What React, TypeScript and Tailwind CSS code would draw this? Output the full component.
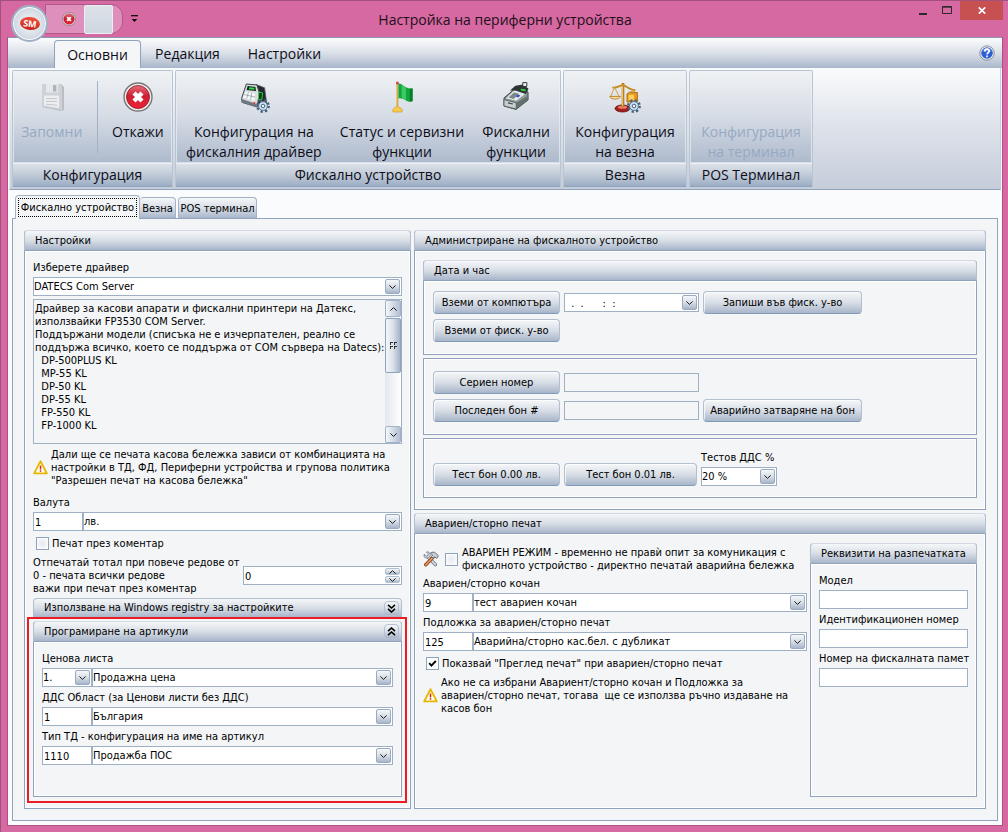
import { useId, useState, type ReactNode } from 'react';
import { clsx } from 'clsx';

const DRIVER_INFO = `Драйвер за касови апарати и фискални принтери на Датекс,
използвайки FP3530 COM Server.
Поддържани модели (списъка не е изчерпателен, реално се
поддържа всичко, което се поддържа от COM сървера на Datecs):
  DP-500PLUS KL
  MP-55 KL
  DP-50 KL
  DP-55 KL
  FP-550 KL
  FP-1000 KL`;

const SILVER = 'bg-linear-to-b from-[#f5f7f9] via-[#d8dee6] to-[#a8b5ca]';
const FIELD = 'h-[19px] min-w-0 border border-[#9fb0c5] bg-white pt-px text-black outline-none';
const LABEL = 'block h-5 leading-[22px] whitespace-nowrap';

/* ---------- icons ---------- */

function Chevron({ up = false }: { up?: boolean }) {
  return (
    <svg viewBox="0 0 7 4" className={clsx('h-[4px] w-[7px]', up && 'rotate-180')}>
      <path d="M.4.4 3.5 3.4 6.6.4" fill="none" stroke="#1b1b1b" />
    </svg>
  );
}

function DoubleChevron({ up = false }: { up?: boolean }) {
  return (
    <svg viewBox="0 0 9 9" className={clsx('h-[9px] w-[9px]', up && 'rotate-180')}>
      <path d="M1 .8 4.5 4 8 .8M1 4.8 4.5 8 8 4.8" fill="none" stroke="#000" strokeWidth="1.6" />
    </svg>
  );
}

function WarningIcon() {
  return (
    <svg viewBox="0 0 15 15" className="h-[15px] w-[15px] shrink-0">
      <path d="M7.5 1.2 13.8 13.4H1.2Z" fill="#fff6a0" stroke="#e8b400" strokeWidth="1.8" strokeLinejoin="round" />
      <path d="M7.5 3.8 11.8 12.2H3.2Z" fill="#fffef0" />
      <path d="M7.5 5.6v3.8M7.5 10.3v1.5" stroke="#d8231b" strokeWidth="1.5" />
    </svg>
  );
}

function ToolsIcon() {
  return (
    <svg viewBox="0 0 16 16" className="h-4 w-4 shrink-0">
      <path d="M5 6 12.4 13.6" stroke="#6d7480" strokeWidth="3.4" strokeLinecap="round" />
      <path d="M5 6 12.4 13.6" stroke="#d5dae2" strokeWidth="1.8" strokeLinecap="round" />
      <path d="M1.2 3.2 3.4 5.2 5 4.6 5.2 2.8 3.4 1C5.4.4 7.4 1.6 7.2 4.4 6.6 6.8 3.4 7.8 1.2 6Z" fill="#dfe3e9" stroke="#6d7480" strokeWidth=".8" />
      <path d="M10 6.4 2.8 13.8" stroke="#7b3f22" strokeWidth="3.4" strokeLinecap="round" />
      <path d="M10 6.4 2.8 13.8" stroke="#f0965a" strokeWidth="1.7" strokeLinecap="round" />
      <path d="M7.4 2.2C9 .8 11.2.8 12.6 2l2.6 2.6-.4 1.8-1.4 1-1.6-1.6-1.6 1.4-1.8-1.8 1.2-1.4Z" fill="#c9cfd8" stroke="#59616e" strokeWidth=".9" />
    </svg>
  );
}

function CancelIcon({ className }: { className?: string }) {
  return (
    <svg viewBox="0 0 30 30" className={className}>
      <defs>
        <linearGradient id="cancelRed" x1="0" y1="0" x2="0" y2="1">
          <stop offset="0" stopColor="#e4707c" />
          <stop offset=".45" stopColor="#cf1f33" />
          <stop offset="1" stopColor="#ee2238" />
        </linearGradient>
      </defs>
      <circle cx="15" cy="15" r="14" fill="#f1efee" stroke="#777" strokeWidth="1.4" />
      <circle cx="15" cy="15" r="11.5" fill="url(#cancelRed)" stroke="#8f1522" strokeWidth=".8" />
      <path d="m11 11 8 8m0-8-8 8" stroke="#fff" strokeWidth="4.4" />
    </svg>
  );
}

function SaveIcon() {
  return (
    <svg viewBox="0 0 32 32" className="h-8 w-8">
      <path d="M6 3h19l3 3v23l-3 1L6 26Z" fill="#b9bdc4" />
      <path d="M6 3h18l2 2.4V29L6 25.6Z" fill="#ced1d6" />
      <path d="M10 3h12v8.6H10Z" fill="#e6e8eb" />
      <path d="M17 4h3.4v6.6H17Z" fill="#aeb3ba" />
      <path d="M8 14.6h15v12.4L8 24.6Z" fill="#eceef0" />
      <path d="M10 17.6h11M10 20.4h11M10 23.2l11 1" stroke="#c3c7cd" />
    </svg>
  );
}

function Gear() {
  return (
    <g transform="translate(25 25)">
      <circle r="5.6" fill="none" stroke="#47617c" strokeWidth="2.6" strokeDasharray="2.2 2.2" />
      <circle r="4.4" fill="#cfe4f3" stroke="#56758f" />
      <circle r="1.8" fill="#f5f9fc" stroke="#47617c" />
    </g>
  );
}

function TerminalGearIcon() {
  return (
    <svg viewBox="0 0 32 32" className="h-8 w-8">
      <path d="m18 3.400 8.600 3.400 2 15-8 3.400Z" fill="#23282d" stroke="#555d66" strokeWidth=".8" />
      <path d="M8.400 3 19 4l2.400 8-2.200 14-15-4.600-.6-4Z" fill="#d6dcdc" stroke="#3a4247" />
      <path d="m3.600 18 14.800 5-.4 3L3.600 21.400Z" fill="#6f787e" />
      <path d="M9.600 5 17.400 6l.6 4-9.400-1Z" fill="#10241a" />
      <path d="m11.400 6.200 4.800.6.200 2-5.600-.6Z" fill="#2ee246" />
      <path d="m7.200 10.800 10 1.600-.6 7.600-11.600-3.400Z" fill="#f7f9f9" />
      <path d="M10.400 11.400 8.600 17.600M13.800 12l-1.200 6.800M6.200 13.600l10.800 2.400" stroke="#97a1a6" strokeWidth=".8" />
      <path d="m20.800 11 3.800 1-.8 7-3.400-1Z" fill="#0c3b14" stroke="#37e04c" strokeWidth=".9" />
      <circle cx="16.400" cy="22" r="1" fill="#e03434" />
      <Gear />
    </svg>
  );
}

function FlagIcon() {
  return (
    <svg viewBox="-2 0 32 32" className="h-8 w-8">
      <path d="M9.400 2v26" stroke="#c98f2a" strokeWidth="1.800" />
      <path d="M9 2v26" stroke="#f7dc8a" strokeWidth=".7" />
      <circle cx="9.400" cy="2" r="1.500" fill="#d9414d" />
      <path d="M10.400 2.600C14 1.600 16 8 24.600 7.600v12.400c-5 3-8.600-4-14.200-2.600Z" fill="#12a43e" />
      <path d="M13.600 3.400c1.600 1.200 2.800 2.600 4.400 3.400v12.400c-1.600-.8-2.800-1.600-4.400-1.900Z" fill="#3ccb62" />
      <path d="M21.800 7.600v13c1.200 0 2-.2 2.800-.6V7.600Z" fill="#0a7d2c" />
      <path d="M5 31c-.8-2.600.8-4.400 3-4.600l1.400-2 1.400 2c2.400.2 4 2 3.200 4.600Z" fill="#f6cb4e" stroke="#d09a25" strokeWidth=".7" />
    </svg>
  );
}

function RegisterIcon() {
  return (
    <svg viewBox="0 0 32 32" className="h-8 w-8">
      <path d="m4 17 10.600-9L28 11v8L16 28.400 4 25Z" fill="#8d9999" stroke="#3b4444" />
      <path d="m4 18.600 12.200 3.200V28L4 25Z" fill="#c6cfcf" stroke="#4b5555" strokeWidth=".8" />
      <path d="m16.200 21.800 12-7V19l-12 9Z" fill="#646f70" />
      <path d="M6 17.400 14 9.600l11.400 3.200-9 7Z" fill="#e4e9e9" />
      <path d="m8.600 16.600 5.400-5.200 5 1.400-5.400 5.200Z" fill="#7b8685" />
      <path d="m15.600 15.600 2.400-2 2.400.8-2.200 2Z" fill="#3651c8" />
      <path d="m10 9.400 5.400-4.600 7.400-1.200 5.800 4.200-2.800 5.200-9.800-3.400Z" fill="#2c3434" />
      <path d="m20.600 7.800 4.800.4.400 2-4.800-.8Z" fill="#2bd843" />
      <path d="M22.800 1.600h4v3.800h-4Z" fill="#f4f6f6" stroke="#2c3434" />
      <path d="m8 21.800 4.800 1.200" stroke="#3f4949" strokeWidth="1.200" />
    </svg>
  );
}

function ScalesIcon() {
  return (
    <svg viewBox="0 0 32 32" className="h-8 w-8">
      <ellipse cx="13.500" cy="27.500" rx="7.500" ry="3.500" fill="#a31e1e" stroke="#641010" strokeWidth=".8" />
      <ellipse cx="13.500" cy="26.200" rx="4.500" ry="1.600" fill="#eb7b62" />
      <path d="M14 2v24" stroke="#b97a16" strokeWidth="2.600" />
      <path d="M13.600 3v22" stroke="#f8d98a" strokeWidth=".8" />
      <path d="M3.400 6.400C8 7.600 12 3.600 14.400 4.200S21 9.600 26.400 9" fill="none" stroke="#c68a22" strokeWidth="1.800" />
      <path d="M5.600 6.400 1.600 15.600M5.600 6.400l4.600 9.200M24 9l-3.600 5M24 9l4 5" stroke="#d5a13a" strokeWidth="1" />
      <path d="M.8 15.400h10.600c-1 3.600-9.400 3.600-10.600 0Z" fill="#f5e2a4" stroke="#b97a16" strokeWidth=".9" />
      <path d="M18 13 20.600 11l7.800.6v9.400H18Z" fill="#e69a20" stroke="#a9640c" strokeWidth=".9" />
      <path d="M19.600 13.800h5.400v5h-5.400Z" fill="#ffcf5b" />
      <Gear />
    </svg>
  );
}

/* ---------- building blocks ---------- */

function Panel({
  title,
  action,
  className,
  bodyClass,
  children,
}: {
  title?: string;
  action?: ReactNode;
  className?: string;
  bodyClass?: string;
  children: ReactNode;
}) {
  return (
    <section className={clsx('flex flex-col border-x border-b border-[#8fa3bc]', title ? 'rounded-t-sm' : 'border-t', className)}>
      {title && (
        <div className={clsx('-mx-px flex h-[21px] shrink-0 items-center justify-between rounded-t border-x border-t border-b border-x-[#b4c0d0] border-t-[#d3d9e2] border-b-[#8fa3bc] pr-[2px] pl-[10px] whitespace-nowrap', SILVER)}>
          <h2 className="pt-px">{title}</h2>
          {action}
        </div>
      )}
      <div className={clsx('flex grow flex-col shadow-[inset_0_0_0_1px_#fff]', bodyClass)}>{children}</div>
    </section>
  );
}

function PushButton({ className, children }: { className?: string; children: ReactNode }) {
  return (
    <button
      type="button"
      className={clsx(
        'h-[23px] shrink-0 rounded border border-[#b3bfcf] border-b-[#8399b8] pt-px whitespace-nowrap shadow-[inset_1px_1px_0_#ffffffb0]',
        SILVER,
        className,
      )}
    >
      {children}
    </button>
  );
}

function DropArrow() {
  return (
    <span className={clsx('pointer-events-none absolute top-[2px] right-[2px] flex h-[15px] w-[15px] items-center justify-center rounded-xs border border-[#9aabc1]', SILVER)}>
      <Chevron />
    </span>
  );
}

function Select({ id, label, value, className }: { id?: string; label?: string; value: string; className?: string }) {
  return (
    <div className={clsx('relative min-w-0', className)}>
      <select id={id} aria-label={label} className={clsx('block w-full appearance-none pr-5', FIELD)}>
        <option>{value}</option>
      </select>
      <DropArrow />
    </div>
  );
}

function CodeCombo({ label, code, value, codeIsList = false }: { label: string; code: string; value: string; codeIsList?: boolean }) {
  const id = useId();
  return (
    <div>
      <label htmlFor={id} className={LABEL}>
        {label}
      </label>
      <div className="flex">
        {codeIsList ? (
          <Select id={id} value={code} className="w-[50px] shrink-0" />
        ) : (
          <input id={id} defaultValue={code} className={clsx('w-[50px] shrink-0 px-px', FIELD)} />
        )}
        <Select label={label} value={value} className="grow" />
      </div>
    </div>
  );
}

function CheckBox({ id, defaultChecked }: { id: string; defaultChecked?: boolean }) {
  return (
    <span className="relative flex h-[13px] w-[13px] shrink-0">
      <input
        id={id}
        type="checkbox"
        defaultChecked={defaultChecked}
        className="peer h-[13px] w-[13px] appearance-none border border-[#8fa3bc] bg-white bg-radial from-[#e6e9ee] to-white checked:from-white"
      />
      <svg viewBox="0 0 13 13" className="pointer-events-none absolute inset-0 hidden peer-checked:block">
        <path d="M3.200 6.200 5.400 8.600 9.800 4" fill="none" stroke="#000" strokeWidth="1.900" />
      </svg>
    </span>
  );
}

function TextField({ label }: { label: string }) {
  const id = useId();
  return (
    <div>
      <label htmlFor={id} className={LABEL}>
        {label}
      </label>
      <input id={id} className={clsx('block w-full px-[2px]', FIELD)} />
    </div>
  );
}

/* ---------- ribbon ---------- */

function RibbonGroup({ caption, className, children }: { caption: string; className: string; children: ReactNode }) {
  return (
    <div className={clsx('flex flex-col rounded-xs border border-[#b9c4d3] border-b-[#8fa2bd]', className)}>
      <div className="flex h-[93px] items-stretch justify-around bg-linear-to-b from-[#f0f2f4] via-[#d6dce5] to-[#adb9cc] px-px pt-2.5 shadow-[inset_0_0_0_1px_#eef2f6a0]">
        {children}
      </div>
      <div className="flex h-[23px] items-center justify-center border-t border-[#eef2f6] bg-linear-to-b from-[#dbe1e8] via-[#c0cad7] to-[#9caec5] whitespace-nowrap">
        {caption}
      </div>
    </div>
  );
}

function RibbonButton({ icon, lines, disabled }: { icon?: ReactNode; lines: string[]; disabled?: boolean }) {
  return (
    <button type="button" disabled={disabled} className="flex flex-col items-center leading-5 whitespace-nowrap disabled:text-[#96a9c3]">
      <span className="mb-[9px] flex h-8 w-8 items-center justify-center">{icon}</span>
      {lines.map((line) => (
        <span key={line}>{line}</span>
      ))}
    </button>
  );
}

function TitleBar() {
  return (
    <header className="relative grid h-9 shrink-0 grid-cols-[1fr_auto_1fr] font-['Open_Sans','Noto_Sans',sans-serif] text-sm text-[#1c1018]">
      <div className="flex items-start">
        <div className="mt-[3px] ml-[38px] flex h-[30px] w-[78px] items-center rounded-r-xl border border-[#b3568a] bg-[#df8fbc] pl-4">
          <button type="button" aria-label="Откажи" className="mr-2">
            <CancelIcon className="h-[14px] w-[14px]" />
          </button>
          <span className="h-[29px] w-[29px] shrink-0 rounded-xs border border-[#e9eff5] bg-linear-to-b from-[#dde2e9] to-[#ced6e0]" />
        </div>
        <button type="button" aria-label="Меню" className="mt-[14px] ml-2">
          <svg viewBox="0 0 7 8" className="h-2 w-[7px]">
            <path d="M0 .7h7" stroke="#000" strokeWidth="1.200" />
            <path d="M.8 4h5.400L3.500 7Z" fill="#000" />
          </svg>
        </button>
      </div>
      <h1 className="self-center pt-px">Настройка на периферни устройства</h1>
      <div className="flex items-start justify-end">
        <button type="button" aria-label="Минимизирай" className="flex h-[19px] w-6 items-center justify-center">
          <svg viewBox="0 0 8 8" className="h-2 w-2">
            <path d="M0 7h8" stroke="#2a2a2a" strokeWidth="2" />
          </svg>
        </button>
        <button type="button" aria-label="Максимизирай" className="mr-px flex h-[18px] w-6 items-center justify-center">
          <svg viewBox="0 0 10 8" className="h-2 w-2.5">
            <path d="M.5.500h9v7h-9ZM0 1.200h10" fill="none" stroke="#2a2a2a" />
          </svg>
        </button>
        <button type="button" aria-label="Затвори" className="flex h-[19px] w-[43px] items-center justify-center bg-[#c75050]">
          <svg viewBox="0 0 8 7" className="h-[7px] w-2">
            <path d="M.8.400 7.200 6.600M7.200.400.8 6.600" stroke="#fff" strokeWidth="1.700" />
          </svg>
        </button>
      </div>

      {/* application button hangs over the tab strip */}
      <button type="button" aria-label="SM" className="absolute top-[4px] left-1 z-10 h-[37px] w-[37px] rounded-full border-2 border-[#9fb0c6] bg-radial from-[#f2f5f8] via-[#dbe1e9] to-[#b3c0d1] shadow-[inset_0_0_0_1px_#fff]">
        <span className="mx-auto flex h-[13px] w-[20px] rotate-6 items-center justify-center rounded-[50%] bg-linear-to-b from-[#f0523c] to-[#c8201a] text-[9px] leading-none font-bold text-white">
          SM
        </span>
      </button>
    </header>
  );
}

function Ribbon() {
  return (
    <nav className="font-['Open_Sans','Noto_Sans',sans-serif] text-sm text-[#0d0d18]">
      <div className="flex h-[31px] items-end border-t border-[#8d94ad] bg-linear-to-b from-[#fbfcfd] via-[#dbe0e8] to-[#a9b7cb] pl-[46px]">
        <button type="button" className="h-7 w-[87px] rounded-t border border-b-0 border-[#8fa3bc] bg-[#f5f6f8]">
          Основни
        </button>
        <button type="button" className="h-7 w-[93px]">Редакция</button>
        <button type="button" className="h-7 w-[101px]">Настройки</button>
        <button type="button" aria-label="Помощ" className="mr-[7px] mb-[7px] ml-auto">
          <svg viewBox="0 0 16 16" className="h-4 w-4">
            <circle cx="8" cy="8" r="7.200" fill="#f2f2f4" stroke="#8b8f98" />
            <circle cx="8" cy="8" r="5.800" fill="#2c5fd6" />
            <path d="M3.200 6.600a5 5 0 0 1 9.600 0Z" fill="#7f9fe9" opacity=".7" />
            <path d="M5.800 6.400C5.800 3.400 10.400 3.600 10.200 6.200 10 7.600 8.200 7.600 8 9.400M8 10.600v1.700" fill="none" stroke="#fff" strokeWidth="1.700" />
          </svg>
        </button>
      </div>

      <div className="mx-px flex h-[122px] gap-[2px] border border-t-0 border-[#8fa3bc] border-r-[#c3cddb] border-l-[#e4e9ef] bg-linear-to-b from-[#fafbfc] via-[#dde2ea] to-[#c6cddb] px-[2px] pt-[2px] pb-[2px]">
        <RibbonGroup caption="Конфигурация" className="w-[161px]">
          <RibbonButton disabled icon={<SaveIcon />} lines={['Запомни']} />
          <span className="mb-2.5 w-px bg-[#a3b1c6]" />
          <RibbonButton icon={<CancelIcon className="h-[30px] w-[30px]" />} lines={['Откажи']} />
        </RibbonGroup>
        <RibbonGroup caption="Фискално устройство" className="w-[386px]">
          <RibbonButton icon={<TerminalGearIcon />} lines={['Конфигурация на', 'фискалния драйвер']} />
          <RibbonButton icon={<FlagIcon />} lines={['Статус и сервизни', 'функции']} />
          <RibbonButton icon={<RegisterIcon />} lines={['Фискални', 'функции']} />
        </RibbonGroup>
        <RibbonGroup caption="Везна" className="w-[124px]">
          <RibbonButton icon={<ScalesIcon />} lines={['Конфигурация', 'на везна']} />
        </RibbonGroup>
        <RibbonGroup caption="POS Терминал" className="w-[124px]">
          <RibbonButton disabled lines={['Конфигурация', 'на терминал']} />
        </RibbonGroup>
      </div>
    </nav>
  );
}

/* ---------- page ---------- */

function DriverInfo() {
  return (
    <div className="flex h-[145px] border border-[#9fb0c5]">
      <textarea
        readOnly
        aria-label="Описание на драйвера"
        value={DRIVER_INFO}
        className="min-w-0 grow resize-none overflow-hidden pt-[2px] pl-px leading-[13px] whitespace-pre outline-none"
      />
      <div className="flex w-4 shrink-0 flex-col bg-linear-to-r from-[#e3e7ed] to-white">
        <button type="button" aria-label="Нагоре" className="flex h-[17px] items-center justify-center rounded-xs border border-[#a3b2c7] bg-linear-to-r from-[#f5f7f9] to-[#b3c0d2]">
          <Chevron up />
        </button>
        <div className="mt-px flex h-[55px] items-center justify-center rounded-xs border border-[#8fa3bc] bg-linear-to-r from-[#f5f7f9] via-[#dbe1e9] to-[#a5b3c9]">
          <svg viewBox="0 0 7 7" className="h-[7px] w-[7px]">
            <path d="M0 .5h3M4 .5h3M0 4.500h3M4 4.500h3M.5 0v3M4.500 0v3M.5 4v3M4.500 4v3" stroke="#222" strokeWidth=".9" />
          </svg>
        </div>
        <button type="button" aria-label="Надолу" className="mt-auto flex h-[17px] items-center justify-center rounded-xs border border-[#a3b2c7] bg-linear-to-r from-[#f5f7f9] to-[#b3c0d2]">
          <Chevron />
        </button>
      </div>
    </div>
  );
}

function CollapseButton({ open, label, onClick }: { open: boolean; label: string; onClick: () => void }) {
  return (
    <button type="button" aria-label={label} aria-expanded={open} onClick={onClick} className={clsx('flex h-[15px] w-[15px] items-center justify-center rounded-sm border border-[#b4c0d0]', SILVER)}>
      <DoubleChevron up={open} />
    </button>
  );
}

function SettingsPanel() {
  const [registryOpen, setRegistryOpen] = useState(false);
  const [itemsOpen, setItemsOpen] = useState(true);

  return (
    <Panel title="Настройки" className="w-[387px] shrink-0" bodyClass="px-2 pt-[6px] pb-[5px] gap-[3px]">
      <div>
        <label htmlFor="driver" className={LABEL}>Изберете драйвер</label>
        <Select id="driver" value="DATECS Com Server" />
      </div>
      <DriverInfo />
      <div className="flex items-center gap-[3px] pt-px pb-[2px]">
        <WarningIcon />
        <p className="leading-[13px] whitespace-nowrap">
          Дали ще се печата касова бележка зависи от комбинацията на
          <br />
          настройки в ТД, ФД, Периферни устройства и групова политика
          <br />
          "Разрешен печат на касова бележка"
        </p>
      </div>
      <CodeCombo label="Валута" code="1" value="лв." />
      <div className="flex h-[19px] items-center gap-[3px] pl-[3px]">
        <CheckBox id="comment-print" />
        <label htmlFor="comment-print" className="pt-px">Печат през коментар</label>
      </div>
      <div className="flex items-center">
        <label htmlFor="total-rows" className="w-[210px] shrink-0 leading-[13px] whitespace-nowrap">
          Отпечатай тотал при повече редове от
          <br />
          0 - печата всички редове
          <br />
          важи при печат през коментар
        </label>
        <div className="relative grow">
          <input id="total-rows" defaultValue="0" className={clsx('block w-full px-px', FIELD)} />
          <span className="absolute top-[2px] right-[2px] flex flex-col gap-px">
            <button type="button" aria-label="Увеличи" className={clsx('flex h-[7px] w-[15px] items-center justify-center rounded-xs border border-[#b4c0d0]', SILVER)}>
              <Chevron up />
            </button>
            <button type="button" aria-label="Намали" className={clsx('flex h-[7px] w-[15px] items-center justify-center rounded-xs border border-[#b4c0d0]', SILVER)}>
              <Chevron />
            </button>
          </span>
        </div>
      </div>
      <div className={clsx('flex h-[19px] items-center justify-between rounded-t border border-b-0 border-[#b4c0d0] pr-[2px] pl-[10px] whitespace-nowrap', SILVER)}>
        <h2 className="pt-px">Използване на Windows registry за настройките</h2>
        <CollapseButton open={registryOpen} label="Използване на Windows registry за настройките" onClick={() => setRegistryOpen(!registryOpen)} />
      </div>
      <div className="-mt-[3px] -mr-[5px] -ml-[6px] flex grow flex-col border-2 border-[#ec1c24] pt-[2px] pr-[3px] pb-1 pl-1">
        <Panel
          title="Програмиране на артикули"
          className="grow"
          bodyClass="px-2 pt-[6px]"
          action={<CollapseButton open={itemsOpen} label="Програмиране на артикули" onClick={() => setItemsOpen(!itemsOpen)} />}
        >
          {itemsOpen && (
            <>
              <CodeCombo label="Ценова листа" code="1." value="Продажна цена" codeIsList />
              <CodeCombo label="ДДС Област (за Ценови листи без ДДС)" code="1" value="България" />
              <CodeCombo label="Тип ТД - конфигурация на име на артикул" code="1110" value="Продажба ПОС" />
            </>
          )}
        </Panel>
      </div>
    </Panel>
  );
}

function AdminPanel() {
  return (
    <Panel title="Администриране на фискалното устройство" bodyClass="gap-[3px] px-2 pt-[9px] pb-[11px]">
      <Panel title="Дата и час" bodyClass="gap-[5px] px-[9px] pt-2.5 pb-3">
        <div className="flex items-center gap-1">
          <PushButton className="w-[127px]">Вземи от компютъра</PushButton>
          <div className="relative w-[135px]">
            <input aria-label="Дата и час" defaultValue=" .  .      :  :" className={clsx('block w-full px-[3px]', FIELD)} />
            <DropArrow />
          </div>
          <PushButton className="w-[159px]">Запиши във фиск. у-во</PushButton>
        </div>
        <PushButton className="w-[127px]">Вземи от фиск. у-во</PushButton>
      </Panel>
      <Panel bodyClass="gap-[5px] px-[9px] py-3">
        <div className="flex items-center gap-1">
          <PushButton className="w-[127px]">Сериен номер</PushButton>
          <input readOnly aria-label="Сериен номер" className="h-[19px] w-[135px] border border-[#9fb0c5]" />
        </div>
        <div className="flex items-center gap-1">
          <PushButton className="w-[127px]">Последен бон #</PushButton>
          <input readOnly aria-label="Последен бон" className="h-[19px] w-[135px] border border-[#9fb0c5]" />
          <PushButton className="w-[159px]">Аварийно затваряне на бон</PushButton>
        </div>
      </Panel>
      <Panel bodyClass="px-[9px] pt-2 pb-[11px]">
        <div className="flex items-end gap-1">
          <PushButton className="w-[127px]">Тест бон 0.00 лв.</PushButton>
          <PushButton className="w-[133px]">Тест бон 0.01 лв.</PushButton>
          <div>
            <label htmlFor="vat" className={LABEL}>Тестов ДДС %</label>
            <Select id="vat" value="20 %" className="w-[76px]" />
          </div>
        </div>
      </Panel>
    </Panel>
  );
}

function EmergencyPanel() {
  return (
    <Panel title="Авариен/сторно печат" className="grow" bodyClass="px-2 pt-[9px] pb-[11px]">
      <div className="flex grow gap-[3px]">
        <div className="flex min-w-0 grow flex-col gap-[3px] pt-[3px]">
          <div>
            <div className="mb-px flex items-center">
              <ToolsIcon />
              <span className="mr-1 ml-[6px] flex">
                <CheckBox id="emergency" />
              </span>
              <label htmlFor="emergency" className="leading-[13px] whitespace-nowrap">
                АВАРИЕН РЕЖИМ - временно не правѝ опит за комуникация с
                <br />
                фискалното устройство - директно печатай аварийна бележка
              </label>
            </div>
            <CodeCombo label="Авариен/сторно кочан" code="9" value="тест авариен кочан" />
            <CodeCombo label="Подложка за авариен/сторно печат" code="125" value="Аварийна/сторно кас.бел. с дубликат" />
          </div>
          <div className="flex h-[19px] items-center gap-[3px] pl-[3px]">
            <CheckBox id="preview" defaultChecked />
            <label htmlFor="preview" className="pt-px">Показвай "Преглед печат" при авариен/сторно печат</label>
          </div>
          <div className="flex items-center gap-[3px]">
            <WarningIcon />
            <p className="leading-[13px] whitespace-pre">
              Ако не са избрани Авариент/сторно кочан и Подложка за
              <br />
              {'авариен/сторно печат, тогава  ще се използва ръчно издаване на'}
              <br />
              касов бон
            </p>
          </div>
        </div>
        <Panel title="Реквизити на разпечатката" className="w-[167px] shrink-0" bodyClass="px-2 pt-[6px]">
          <TextField label="Модел" />
          <TextField label="Идентификационен номер" />
          <TextField label="Номер на фискалната памет" />
        </Panel>
      </div>
    </Panel>
  );
}

function PageTabs() {
  return (
    <div className="relative z-10 -mb-px flex items-end pl-[3px]">
      <button type="button" className="h-6 w-[125px] rounded-t border border-b-0 border-[#a3b2c7] bg-[#f3f5f7] p-[2px]">
        <span className="flex h-full items-center justify-center border border-dotted border-black pt-[2px] whitespace-nowrap">Фискално устройство</span>
      </button>
      <button type="button" className={clsx('mr-[2px] mb-px h-[21px] w-9 rounded-t border border-b-0 border-l-0 border-[#a3b2c7] pt-[3px]', SILVER)}>
        Везна
      </button>
      <button type="button" className={clsx('mb-px h-[21px] w-[79px] rounded-t border border-b-0 border-[#a3b2c7] pt-[3px] whitespace-nowrap', SILVER)}>
        POS терминал
      </button>
    </div>
  );
}

export default function App() {
  return (
    <div className="flex min-h-screen flex-col border-t border-l border-[#a2507e] bg-[#d668a2] pr-[5px] pb-[6px] pl-[6px] font-['DejaVu_Sans_Condensed','DejaVu_Sans',sans-serif] text-[11px] text-black">
      <TitleBar />
      <div className="flex grow flex-col border-x border-b border-[#b04f86] bg-[#fafbfd]">
        <Ribbon />
        <main className="flex grow flex-col px-1 pt-[5px] pb-1">
          <PageTabs />
          <div className="flex grow gap-[3px] border border-[#8fa3bc] bg-[#f3f5f7] p-[11px]">
            <SettingsPanel />
            <div className="flex min-w-0 grow flex-col gap-[3px]">
              <AdminPanel />
              <EmergencyPanel />
            </div>
          </div>
        </main>
      </div>
    </div>
  );
}
